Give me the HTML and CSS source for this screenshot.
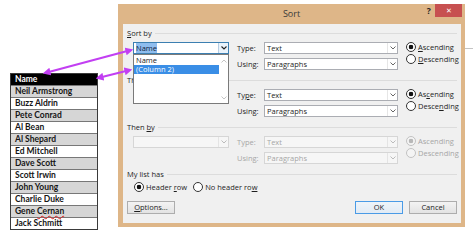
FILE: index.html
```html
<!DOCTYPE html>
<html lang="en">
<head>
    <meta charset="UTF-8">
    <title>Sort</title>
    <link rel="stylesheet" href="styles.css">
</head>
<body>
<div class="page">
    <div class="names">
        <div class="head">Name</div>
        <div class="shade">Neil Armstrong</div>
        <div>Buzz Aldrin</div>
        <div class="shade">Pete Conrad</div>
        <div>Al Bean</div>
        <div class="shade">Al Shepard</div>
        <div>Ed Mitchell</div>
        <div class="shade">Dave Scott</div>
        <div>Scott Irwin</div>
        <div class="shade">John Young</div>
        <div>Charlie Duke</div>
        <div class="shade">Gene <span class="typo">Cernan</span></div>
        <div>Jack Schmitt</div>
    </div>

    <div class="dialog">
        <div class="titlebar">
            <span></span>
            <span class="title">Sort</span>
            <div class="caption-btns">
                <span class="help">?</span>
                <span class="close">&#x2715;</span>
            </div>
        </div>

        <div class="client">
            <div class="group-label"><span><u>S</u>ort by</span></div>
            <div class="sort-row">
                <div class="combo focus"><span class="val"><span class="sel">Name</span></span><span class="drop"><svg width="6" height="4" viewBox="0 0 6 4"><polyline points="0.5,0.5 3,3 5.5,0.5" fill="none" stroke="#222" stroke-width="1.1"/></svg></span></div>
                <span class="lbl">Type:</span>
                <div class="combo"><span class="val">Text</span><span class="drop"><svg width="6" height="4" viewBox="0 0 6 4"><polyline points="0.5,0.5 3,3 5.5,0.5" fill="none" stroke="#666" stroke-width="1"/></svg></span></div>
                <div class="radios">
                    <span class="radio on"><span><u>A</u>scending</span></span>
                    <span class="radio"><span><u>D</u>escending</span></span>
                </div>
                <span></span>
                <span class="lbl">Using:</span>
                <div class="combo"><span class="val">Paragraphs</span><span class="drop"><svg width="6" height="4" viewBox="0 0 6 4"><polyline points="0.5,0.5 3,3 5.5,0.5" fill="none" stroke="#666" stroke-width="1"/></svg></span></div>
            </div>

            <div class="group-label"><span>Then <u>b</u>y</span></div>
            <div class="sort-row">
                <div class="combo"><span class="val"></span><span class="drop"><svg width="6" height="4" viewBox="0 0 6 4"><polyline points="0.5,0.5 3,3 5.5,0.5" fill="none" stroke="#666" stroke-width="1"/></svg></span></div>
                <span class="lbl">Ty<u>p</u>e:</span>
                <div class="combo"><span class="val">Text</span><span class="drop"><svg width="6" height="4" viewBox="0 0 6 4"><polyline points="0.5,0.5 3,3 5.5,0.5" fill="none" stroke="#666" stroke-width="1"/></svg></span></div>
                <div class="radios">
                    <span class="radio on"><span>As<u>c</u>ending</span></span>
                    <span class="radio"><span>Desce<u>n</u>ding</span></span>
                </div>
                <span></span>
                <span class="lbl">Using:</span>
                <div class="combo"><span class="val">Paragraphs</span><span class="drop"><svg width="6" height="4" viewBox="0 0 6 4"><polyline points="0.5,0.5 3,3 5.5,0.5" fill="none" stroke="#666" stroke-width="1"/></svg></span></div>
            </div>

            <div class="group-label"><span>Then <u>b</u>y</span></div>
            <div class="sort-row off">
                <div class="combo"><span class="val"></span><span class="drop"><svg width="6" height="4" viewBox="0 0 6 4"><polyline points="0.5,0.5 3,3 5.5,0.5" fill="none" stroke="#bbb" stroke-width="1"/></svg></span></div>
                <span class="lbl">Type:</span>
                <div class="combo"><span class="val">Text</span><span class="drop"><svg width="6" height="4" viewBox="0 0 6 4"><polyline points="0.5,0.5 3,3 5.5,0.5" fill="none" stroke="#bbb" stroke-width="1"/></svg></span></div>
                <div class="radios">
                    <span class="radio on"><span>Ascending</span></span>
                    <span class="radio"><span>Descending</span></span>
                </div>
                <span></span>
                <span class="lbl">Using:</span>
                <div class="combo"><span class="val">Paragraphs</span><span class="drop"><svg width="6" height="4" viewBox="0 0 6 4"><polyline points="0.5,0.5 3,3 5.5,0.5" fill="none" stroke="#bbb" stroke-width="1"/></svg></span></div>
            </div>

            <div class="group-label"><span>My list has</span></div>
            <div class="header-opts">
                <span class="radio on"><span>Header <u>r</u>ow</span></span>
                <span class="radio"><span>No header ro<u>w</u></span></span>
            </div>

            <div class="buttons">
                <span class="btn"><u>O</u>ptions...</span>
                <span class="spacer"></span>
                <span class="btn default">OK</span>
                <span class="btn">Cancel</span>
            </div>

            <!-- the open drop down of the first combo -->
            <div class="list">
                <div class="items">
                    <div class="item">Name</div>
                    <div class="item hl">(Column 2)</div>
                </div>
                <div class="scroll">
                    <svg width="6" height="4" viewBox="0 0 6 4"><polyline points="0.5,3.5 3,1 5.5,3.5" fill="none" stroke="#c4c4c4" stroke-width="1"/></svg>
                    <svg width="6" height="4" viewBox="0 0 6 4"><polyline points="0.5,0.5 3,3 5.5,0.5" fill="none" stroke="#c4c4c4" stroke-width="1"/></svg>
                </div>
            </div>
        </div>
    </div>

    <span class="edge-line"></span>

    <svg class="arrows" width="473" height="230" viewBox="0 0 473 230">
        <defs>
            <marker id="hd" viewBox="0 0 10 10" refX="7" refY="5" markerWidth="3.6" markerHeight="3.6" orient="auto-start-reverse">
                <path d="M0 0L10 5L0 10z" fill="#c23ff2"/>
            </marker>
        </defs>
        <line x1="45" y1="73" x2="131" y2="50" stroke="#c23ff2" stroke-width="2.2" marker-start="url(#hd)" marker-end="url(#hd)"/>
        <line x1="98" y1="78" x2="130" y2="70" stroke="#c23ff2" stroke-width="2.2" marker-start="url(#hd)" marker-end="url(#hd)"/>
    </svg>
</div>
</body>
</html>
```

FILE: styles.css
```css
*{
    margin: 0;
    padding: 0;
    box-sizing: border-box;
}

body{
    width: 473px;
    height: 230px;
    overflow: hidden;
    background-color: #fff;
    font-family: "Open Sans", "Noto Sans", sans-serif;
    font-size: 7.5px;
    color: #1e1e1e;
}

.page{
    position: relative;
    display: flex;
    align-items: flex-start;
    width: 473px;
    height: 230px;
}

/* the worksheet column */
.names{
    margin: 73px 0 0 10px;
    width: 88px;
    border: 1px solid #3a3a3a;
    font-family: Lato, "Liberation Sans", sans-serif;
    font-weight: 700;
    font-size: 8.5px;
}

.names div{
    height: 12px;
    line-height: 11px;
    padding-left: 4px;
    border-top: 1px solid #777;
    background-color: #fff;
    color: #151515;
}

.names .head{
    height: 11px;
    border-top: none;
    background-color: #000;
    color: #fff;
}

.names .shade{
    background-color: #d6d6d6;
}

.typo{
    text-decoration: underline wavy #e02020;
    text-decoration-thickness: 1px;
    text-underline-offset: 1px;
}

/* dialog window */
.dialog{
    margin: 4px 0 0 20px;
    width: 347px;
    height: 223px;
    background-color: #deb688;
    display: flex;
    flex-direction: column;
}

.titlebar{
    height: 20px;
    display: grid;
    grid-template-columns: 40px 1fr 40px;
}

.title{
    text-align: center;
    line-height: 20px;
    font-size: 9px;
    color: #3a3a3a;
}

.caption-btns{
    display: flex;
    justify-content: flex-end;
    align-items: flex-start;
    margin-right: 3px;
}

.help{
    width: 8px;
    margin-right: 3px;
    line-height: 13px;
    text-align: center;
    font-size: 8.5px;
    font-weight: 700;
    color: #222;
}

.close{
    width: 29px;
    height: 13px;
    background-color: #c75050;
    color: #fff;
    display: flex;
    justify-content: center;
    align-items: center;
    font-size: 7px;
}

.client{
    position: relative;
    flex: 1;
    margin: 0 4px 4px 5px;
    padding: 2px 4px 0;
    background-color: #f0f0f0;
}

.group-label{
    display: flex;
    align-items: center;
    gap: 3px;
    height: 14px;
}

.group-label::after{
    content: "";
    flex: 1;
    height: 1px;
    background-color: #dcdcdc;
}

.sort-row{
    display: grid;
    grid-template-columns: 96px 35px 134px auto;
    grid-template-rows: 12px 12px;
    row-gap: 4px;
    margin: 2px 0 3px 6px;
}

.lbl{
    padding-left: 8px;
    line-height: 12px;
}

.combo{
    display: flex;
    height: 12px;
    border: 1px solid #abadb3;
    background-color: #fff;
}

.combo .val{
    flex: 1;
    padding-left: 2px;
    line-height: 10px;
    white-space: nowrap;
}

.combo .drop{
    width: 10px;
    display: flex;
    justify-content: center;
    align-items: center;
    border-left: 1px solid #e6e6e6;
}

.combo.focus{
    border-color: #3c7fb1;
}

.combo.focus .drop{
    background-color: #eaf3fb;
    border-left-color: #b6cde3;
}

.sel{
    background-color: #8fbdee;
    color: #10213c;
}

.radios{
    grid-column: 4;
    grid-row: 1 / 3;
    display: flex;
    flex-direction: column;
    padding-left: 8px;
    margin-top: -1px;
}

.radio{
    display: flex;
    align-items: center;
    gap: 2px;
    height: 12px;
    white-space: nowrap;
}

.radio::before{
    content: "";
    width: 8px;
    height: 8px;
    border-radius: 50%;
    border: 1px solid #333;
    background-color: #fff;
}

.radio.on::before{
    background: radial-gradient(circle, #111 0 2px, #fff 2.6px);
}

.off .lbl,
.off .radio,
.off .combo .val{
    color: #a6a6a6;
}

.off .combo{
    background-color: #f6f6f6;
    border-color: #d6d6d6;
}

.off .combo .drop{
    border-left-color: #e4e4e4;
}

.off .radio::before{
    border-color: #c2c2c2;
    background-color: #f4f4f4;
}

.off .radio.on::before{
    background: radial-gradient(circle, #b8b8b8 0 2px, #f4f4f4 2.6px);
}

.header-opts{
    display: flex;
    gap: 6px;
    margin-left: 7px;
    height: 12px;
}

.buttons{
    display: flex;
    gap: 6px;
    margin-top: 8px;
}

.spacer{
    flex: 1;
}

.btn{
    width: 48px;
    height: 13px;
    line-height: 11px;
    text-align: center;
    border: 1px solid #adadad;
    background: linear-gradient(#f3f3f3, #e3e3e3);
}

.btn.default{
    border-color: #4a9be6;
    background: linear-gradient(#eef4fa, #e2ebf4);
}

/* open list of the first combo */
.list{
    position: absolute;
    left: 10px;
    top: 30px;
    width: 96px;
    height: 50px;
    display: flex;
    border: 1px solid #7a7a7a;
    background-color: #fff;
}

.items{
    flex: 1;
    padding-top: 1px;
}

.item{
    height: 9px;
    line-height: 9px;
    padding-left: 2px;
}

.item.hl{
    background-color: #3a8ee6;
    color: #fff;
}

.scroll{
    width: 9px;
    display: flex;
    flex-direction: column;
    justify-content: space-between;
    align-items: center;
    padding: 4px 0 3px;
}

.edge-line{
    width: 8px;
    height: 1px;
    margin-top: 48px;
    background-color: #c4c4c4;
}

.arrows{
    position: absolute;
    left: 0;
    top: 0;
    pointer-events: none;
}
```
